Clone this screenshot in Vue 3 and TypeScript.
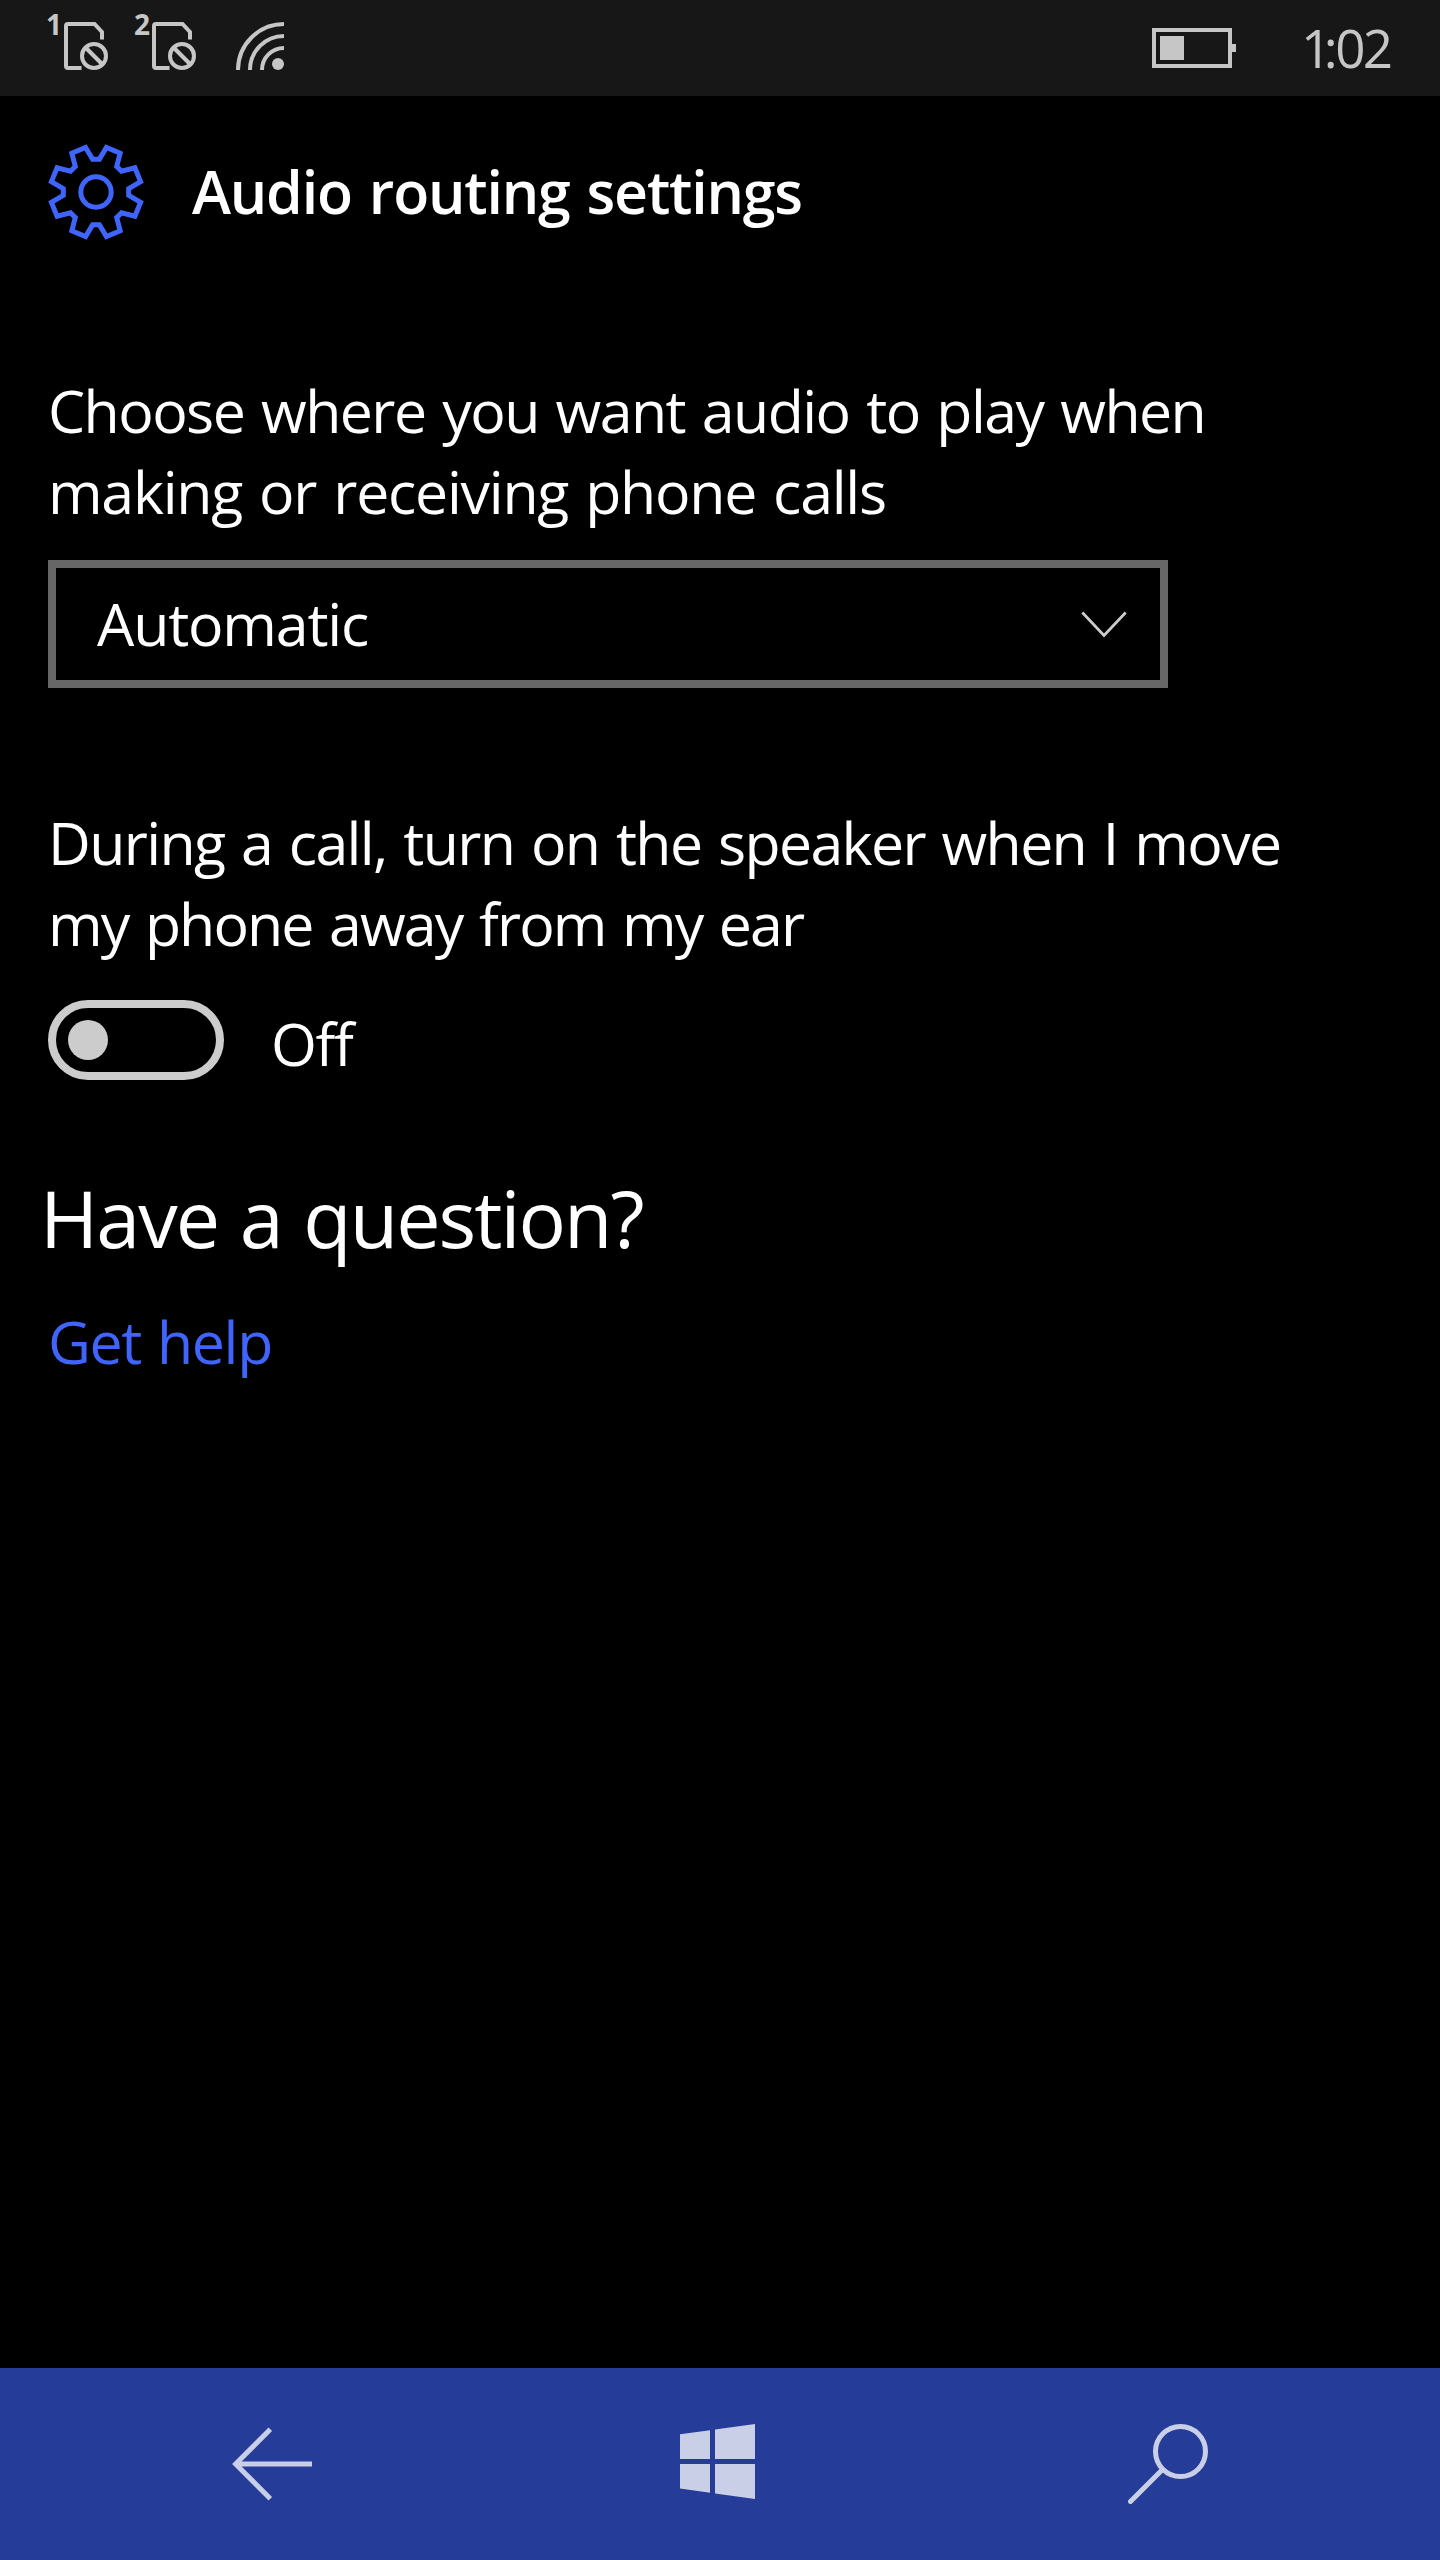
<script setup lang="ts">
import { ref } from 'vue'

const sims: string[] = ['1', '2']
const speakerOn = ref(false)

// One notch of the gear outline, repeated every 45 degrees around the origin
const notch: [number, number][] = [[-10.4, -44.6], [-3.4, -32.7], [3.4, -32.7], [10.4, -44.6]]
const gearPoints: string = Array.from({ length: 8 }, (_, k) => {
  const a = (k * Math.PI) / 4
  return notch
    .map(([x, y]) => `${(x * Math.cos(a) - y * Math.sin(a)).toFixed(2)},${(x * Math.sin(a) + y * Math.cos(a)).toFixed(2)}`)
    .join(' ')
}).join(' ')
</script>

<template>
  <div class="phone">
    <header class="status">
      <div class="signals">
        <div v-for="n in sims" :key="n" class="sim">
          <span class="sim-no">{{ n }}</span>
          <svg class="sim-icon" width="46" height="50" viewBox="0 0 46 50" fill="none" stroke="#c6c6c6" stroke-width="4">
            <path d="M17.5 48H4a2 2 0 0 1-2-2V6a2 2 0 0 1 2-2h26.500l7.500 8v7.500" />
            <circle cx="30" cy="36" r="12" />
            <path d="M21.500 27.500l17 17" />
          </svg>
        </div>
        <svg class="wifi" width="48" height="48" viewBox="0 0 48 48" fill="none" stroke="#c6c6c6" stroke-width="4">
          <path d="M2 48A46 46 0 0 1 48 2M14 48A34 34 0 0 1 48 14M26 48A22 22 0 0 1 48 26" />
          <circle cx="42" cy="42" r="6" fill="#c6c6c6" stroke="none" />
        </svg>
      </div>
      <div class="right">
        <svg width="84" height="40" viewBox="0 0 84 40" fill="#c6c6c6">
          <rect x="2" y="2" width="76" height="36" fill="none" stroke="#c6c6c6" stroke-width="4" />
          <rect x="8" y="8" width="24" height="24" />
          <rect x="80" y="16" width="4" height="8" />
        </svg>
        <span class="clock"><span class="hour">1</span>:02</span>
      </div>
    </header>

    <main class="page">
      <div class="title-row">
        <svg width="96" height="96" viewBox="-48 -48 96 96" fill="none" stroke="#4065ff" stroke-width="5">
          <polygon :points="gearPoints" />
          <circle r="15.2" />
        </svg>
        <h1>Audio routing settings</h1>
      </div>

      <p class="label route">
        <span class="l1">Choose where you want audio to play when</span>
        <span class="l2">making or receiving phone calls</span>
      </p>
      <div class="select">
        <span>Automatic</span>
        <svg width="50" height="30" viewBox="0 0 50 30" fill="none" stroke="#ccc" stroke-width="2.8">
          <path d="M3.300 4.500L25 27.500L46.700 4.500" />
        </svg>
      </div>

      <p class="label speaker">
        <span class="l3">During a call, turn on the speaker when I move</span>
        <span class="l4">my phone away from my ear</span>
      </p>
      <div class="toggle-row">
        <button class="toggle" :class="{ on: speakerOn }" @click="speakerOn = !speakerOn"><i></i></button>
        <span class="state">{{ speakerOn ? 'On' : 'Off' }}</span>
      </div>

      <h2>Have a question?</h2>
      <a class="help">Get help</a>
    </main>

    <nav class="nav">
      <svg class="back" width="82" height="76" viewBox="0 0 82 76" fill="none" stroke="#c9cfe7" stroke-width="5">
        <path d="M40.300 3.300L5.600 38L40.300 72.700M5.600 38H82" />
      </svg>
      <svg class="start" width="75" height="75" viewBox="0 0 75 75" fill="#c9cfe7">
        <path d="M0 10.300L30 6.300V35H0zM35 5.500L75 0V35H35zM0 40H30V68.700L0 64.500zM35 40H75V75L35 69.500z" />
      </svg>
      <svg class="search" width="80" height="80" viewBox="0 0 80 80" fill="none" stroke="#c9cfe7" stroke-width="5" stroke-linecap="round">
        <circle cx="52.500" cy="27.500" r="25" />
        <path d="M34.500 45.500L2.500 77.500" />
      </svg>
    </nav>
  </div>
</template>

<style>
body { margin: 0; background: #000; }
</style>

<style scoped>
.phone {
  width: 1440px;
  height: 2560px;
  display: flex;
  flex-direction: column;
  background: #000;
  color: #fff;
  font-family: "Open Sans", "Noto Sans", sans-serif;
  font-size: 59px;
  overflow: hidden;
  white-space: nowrap;
}
svg { display: block; flex: none; }
.status {
  height: 96px;
  flex: none;
  box-sizing: border-box;
  padding: 0 50px 0 46px;
  display: flex;
  justify-content: space-between;
  background: #171717;
  color: #c6c6c6;
}
.signals { display: flex; }
.sim { display: flex; width: 88px; }
.sim-no {
  width: 18px;
  margin-top: 10px;
  font-size: 28px;
  line-height: 28px;
  font-weight: 700;
  letter-spacing: -1px;
}
.sim-icon { margin-top: 20px; }
.wifi { margin: 22px 0 0 14px; }
.right { display: flex; padding-top: 28px; }
.clock {
  width: 89px;
  margin: -20px 0 0 65px;
  font-size: 53px;
  line-height: 80px;
  font-weight: 400;
  letter-spacing: -2.6px;
}
.hour { letter-spacing: -7.5px; }
.page {
  flex: 1;
  display: flex;
  flex-direction: column;
  align-items: flex-start;
  padding: 48px 0 0 48px;
}
.title-row {
  display: flex;
  align-items: center;
  gap: 48px;
  height: 96px;
}
h1 {
  margin: -2px 0 0;
  font-size: 59px;
  line-height: 80px;
  font-weight: 600;
  letter-spacing: -1.19px;
  word-spacing: 3px;
}
.label { margin: 0; line-height: 81px; word-spacing: 3px; }
.label span { display: block; }
.route { margin-top: 130px; }
.l1 { letter-spacing: -1.56px; }
.l2 { letter-spacing: -1.25px; }
.l3 { letter-spacing: -1.65px; }
.l4 { letter-spacing: -1.87px; }
.select {
  box-sizing: border-box;
  width: 1120px;
  height: 128px;
  margin-top: 28px;
  padding: 0 31px 0 41px;
  border: 8px solid #666;
  display: flex;
  align-items: center;
  justify-content: space-between;
  line-height: 80px;
  letter-spacing: -1.17px;
}
.select span { margin-top: -3px; }
.select svg { margin-top: -2px; }
.speaker { margin-top: 114px; }
.toggle-row { display: flex; align-items: flex-start; height: 80px; margin-top: 36px; }
.toggle {
  box-sizing: border-box;
  width: 176px;
  height: 80px;
  padding: 12px;
  border: 8px solid #ccc;
  border-radius: 40px;
  background: none;
  display: flex;
}
.toggle i { width: 40px; height: 40px; border-radius: 50%; background: #ccc; }
.toggle.on { justify-content: flex-end; }
.state { margin: 3px 0 0 47px; line-height: 80px; letter-spacing: -1.4px; }
h2 {
  margin: 83px 0 0 -8px;
  font-size: 79px;
  line-height: 110px;
  font-weight: 400;
  letter-spacing: -1.95px;
  word-spacing: 3px;
}
.help { margin-top: 28px; line-height: 80px; letter-spacing: -1.35px; word-spacing: 2px; color: #4065ff; }
.nav {
  height: 192px;
  flex: none;
  box-sizing: border-box;
  padding: 56px 232px 0 230px;
  display: flex;
  justify-content: space-between;
  background: #253c98;
}
.back { margin-top: 2px; }
.start { margin: 0 3px 0 -3px; }
</style>
